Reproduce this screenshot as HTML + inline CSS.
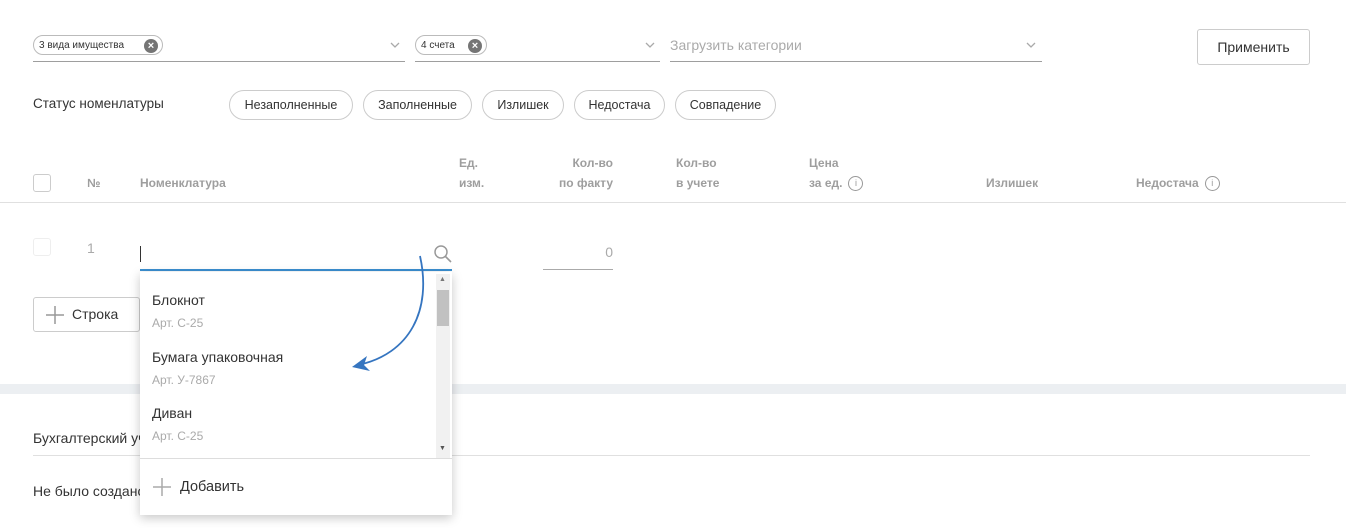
<!DOCTYPE html><html><head><meta charset="utf-8"><style>
body{margin:0;width:1346px;height:528px;overflow:hidden;background:#fff;font-family:"Liberation Sans",sans-serif;color:#333;position:relative}
.a{position:absolute}
.ul{border-bottom:1px solid #9e9e9e;height:1px}
.chip{border:1px solid #bbb;border-radius:11px;height:20px;font-size:10px;line-height:20px;padding-left:5px;box-sizing:border-box;background:#fff}
.x{position:absolute;right:4px;top:3px;width:14px;height:14px;border-radius:50%;background:#757575;color:#fff;font-size:11px;line-height:14px;text-align:center;font-weight:bold}
.pill{border:1px solid #ccc;border-radius:15px;height:30px;box-sizing:border-box;font-size:12.5px;line-height:28px;text-align:center;top:90px}
.h{color:#9e9e9e;font-size:12px;font-weight:bold;line-height:20px}
.info{display:inline-block;width:13px;height:13px;border:1px solid #999;border-radius:50%;font-size:9px;line-height:13px;text-align:center;color:#999;font-weight:normal;vertical-align:middle;margin-left:6px}
.it{font-size:14px;color:#333}.art{font-size:12px;color:#aaa}
</style></head><body>
<div class="a ul" style="left:33px;top:60px;width:372px"></div>
<div class="a chip" style="left:33px;top:35px;width:130px">3 вида имущества<span class="x">×</span></div>
<svg class="a" style="left:390px;top:41px" width="10" height="8"><path d="M1 2L5 6L9 2" fill="none" stroke="#aaa" stroke-width="1.3"/></svg>
<div class="a ul" style="left:415px;top:60px;width:245px"></div>
<div class="a chip" style="left:415px;top:35px;width:72px">4 счета<span class="x">×</span></div>
<svg class="a" style="left:645px;top:41px" width="10" height="8"><path d="M1 2L5 6L9 2" fill="none" stroke="#aaa" stroke-width="1.3"/></svg>
<div class="a ul" style="left:670px;top:60px;width:372px"></div>
<div class="a" style="left:670px;top:37px;font-size:14px;color:#aaa">Загрузить категории</div>
<svg class="a" style="left:1026px;top:41px" width="10" height="8"><path d="M1 2L5 6L9 2" fill="none" stroke="#aaa" stroke-width="1.3"/></svg>
<div class="a" style="left:1197px;top:29px;width:113px;height:36px;border:1px solid #ccc;border-radius:3px;box-sizing:border-box;font-size:14px;line-height:34px;text-align:center">Применить</div>
<div class="a" style="left:33px;top:96px;font-size:13.5px">Статус номенлатуры</div>
<div class="a pill" style="left:229px;width:124px">Незаполненные</div>
<div class="a pill" style="left:363px;width:109px">Заполненные</div>
<div class="a pill" style="left:482px;width:82px">Излишек</div>
<div class="a pill" style="left:574px;width:91px">Недостача</div>
<div class="a pill" style="left:675px;width:101px">Совпадение</div>
<div class="a" style="left:33px;top:174px;width:18px;height:18px;border:1px solid #ccc;border-radius:3px;box-sizing:border-box"></div>
<div class="a h" style="left:87px;top:173px">№</div>
<div class="a h" style="left:140px;top:173px">Номенклатура</div>
<div class="a h" style="left:459px;top:153px">Ед.<br>изм.</div>
<div class="a h" style="left:513px;top:153px;width:100px;text-align:right">Кол-во<br>по факту</div>
<div class="a h" style="left:676px;top:153px">Кол-во<br>в учете</div>
<div class="a h" style="left:809px;top:153px">Цена<br>за ед.<span class="info">i</span></div>
<div class="a h" style="left:986px;top:173px">Излишек</div>
<div class="a h" style="left:1136px;top:173px">Недостача<span class="info">i</span></div>
<div class="a" style="left:0;top:202px;width:1346px;height:1px;background:#e0e0e0"></div>
<div class="a" style="left:33px;top:238px;width:18px;height:18px;border:1px solid #eee;border-radius:3px;box-sizing:border-box"></div>
<div class="a" style="left:87px;top:240px;font-size:14px;color:#aaa">1</div>
<div class="a" style="left:140px;top:246px;width:1px;height:16px;background:#333"></div>
<svg class="a" style="left:433px;top:244px" width="20" height="20"><circle cx="8" cy="8" r="6" fill="none" stroke="#999" stroke-width="1.5"/><path d="M12.5 12.5L18 18" stroke="#999" stroke-width="1.6"/></svg>
<div class="a" style="left:140px;top:269px;width:312px;height:2px;background:#3b8fd0"></div>
<div class="a" style="left:543px;top:244px;width:70px;text-align:right;font-size:14px;color:#aaa">0</div>
<div class="a" style="left:543px;top:269px;width:70px;height:1px;background:#aaa"></div>
<div class="a" style="left:33px;top:297px;width:107px;height:35px;border:1px solid #ccc;border-radius:3px;box-sizing:border-box;font-size:14px;line-height:33px;padding-left:38px">Строка</div>
<svg class="a" style="left:45px;top:305px" width="20" height="20"><path d="M10 1V19M1 10H19" stroke="#999" stroke-width="1.5"/></svg>
<div class="a" style="left:0;top:384px;width:1346px;height:10px;background:#eceff2"></div>
<div class="a" style="left:33px;top:430px;font-size:14px">Бухгалтерский учет</div>
<div class="a" style="left:33px;top:455px;width:1277px;height:1px;background:#e0e0e0"></div>
<div class="a" style="left:33px;top:483px;font-size:14px">Не было создано</div>
<div class="a" style="left:140px;top:272px;width:312px;height:243px;background:#fff;box-shadow:0 3px 10px rgba(0,0,0,.22)">
<div class="a it" style="left:12px;top:20px">Блокнот</div><div class="a art" style="left:12px;top:44px">Арт. С-25</div>
<div class="a it" style="left:12px;top:77px">Бумага упаковочная</div><div class="a art" style="left:12px;top:101px">Арт. У-7867</div>
<div class="a it" style="left:12px;top:133px">Диван</div><div class="a art" style="left:12px;top:157px">Арт. С-25</div>
<div class="a" style="left:296px;top:2px;width:14px;height:184px;background:#f1f1f1"></div>
<div class="a" style="left:297px;top:18px;width:12px;height:36px;background:#c1c1c1"></div>
<div class="a" style="left:299px;top:4px;font-size:7px;color:#777">▲</div>
<div class="a" style="left:299px;top:173px;font-size:7px;color:#555">▼</div>
<div class="a" style="left:0;top:186px;width:312px;height:1px;background:#ddd"></div>
<svg class="a" style="left:12px;top:205px" width="20" height="20"><path d="M10 1V19M1 10H19" stroke="#aaa" stroke-width="1.5"/></svg>
<div class="a it" style="left:40px;top:207px;font-size:14.5px">Добавить</div>
</div>
<svg class="a" style="left:340px;top:250px" width="90" height="125"><path d="M80 6C92 60 70 104 18 115" fill="none" stroke="#3575c0" stroke-width="1.8"/><path d="M12 117L27 106L24 115L30 121Z" fill="#3575c0"/></svg>
</body></html>
